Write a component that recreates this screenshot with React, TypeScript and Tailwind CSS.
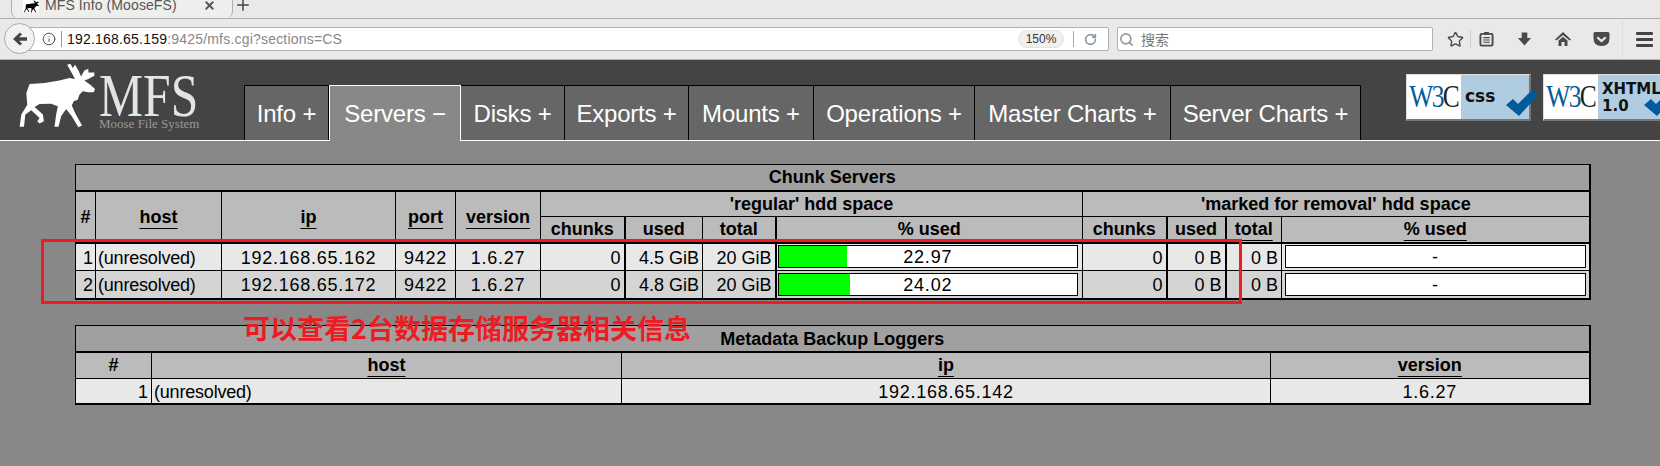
import React from 'react';
import { Info, RotateCw, Search, Star, Plus, X } from 'lucide-react';

const MOOSE =
  'M85 103 L130 100 L175 92 L205 85 L222 88 L212 70 L198 45 L208 42 L215 55 L222 45 L232 62 L240 80 L250 62 L262 57 L262 68 L280 68 L280 78 L262 88 L250 92 L268 105 L282 118 L278 128 L262 128 L245 125 L235 135 L230 150 L218 155 L212 168 L222 190 L243 228 L232 233 L212 200 L195 178 L180 200 L172 232 L160 232 L165 195 L170 170 L150 162 L115 163 L100 172 L125 195 L128 215 L115 222 L108 215 L115 205 L90 182 L72 195 L68 232 L55 232 L60 195 L78 165 L75 130 Z';

function Moose({ className }: { className: string }) {
  return (
    <svg viewBox="50 40 235 195" className={className} fill="currentColor">
      <path d={MOOSE} />
    </svg>
  );
}

const tabs = [
  { label: 'Info +', width: 'w-[85px]' },
  { label: 'Servers −', width: 'w-[132px]', active: true },
  { label: 'Disks +', width: 'w-[104px]' },
  { label: 'Exports +', width: 'w-[124px]' },
  { label: 'Mounts +', width: 'w-[125px]' },
  { label: 'Operations +', width: 'w-[161px]' },
  { label: 'Master Charts +', width: 'w-[196px]' },
  { label: 'Server Charts +', width: 'w-[190px]' },
];

function BrowserChrome() {
  return (
    <div className="h-[60px] bg-[#e9e9e7] border-b border-[#b4b4b2]">
      {/* tab strip */}
      <div className="h-[19px] border-b border-[#aeaeac] flex items-center relative overflow-hidden">
        <div className="ml-[11px] w-[222px] h-[19px] bg-[#eeeeec] border-r border-l border-[#aeaeac] rounded-b-[8px] flex items-center pl-[11px] text-[#444]">
          <div className="w-[16px] h-[14px] bg-white flex items-center justify-center -mt-[6px]">
            <Moose className="w-[15px] h-[13px] text-black" />
          </div>
          <span className="ml-[6px] w-[150px] text-[14px] leading-[15px] -mt-[8px] tracking-[0.1px] text-[#555]">MFS Info (MooseFS)</span>
          <X size={13} strokeWidth={3.5} className="-mt-[8px] ml-[8px] text-[#555]" />
        </div>
        <Plus size={18} strokeWidth={2} className="ml-[1px] -mt-[8px] text-[#444]" />
      </div>
      {/* address row */}
      <div className="h-[40px] flex items-center relative">
        <div className="ml-[18px] w-[1091px] h-[24px] bg-white border border-[#b0b0ae] rounded-[2px] flex items-center text-[14px] tracking-[0.2px]">
          <Info size={14} strokeWidth={1.6} className="ml-[23px] text-[#444]" />
          <div className="ml-[5px] w-px h-[16px] bg-[#999]" />
          <span className="ml-[5px] text-[#111]">192.168.65.159</span>
          <span className="text-[#888]">:9425/mfs.cgi?sections=CS</span>
          <div className="ml-auto w-[46px] h-[18px] bg-[#f0f0f0] border border-[#e4e4e4] rounded-full text-[12px] leading-[16px] text-center text-[#333] tracking-normal">150%</div>
          <div className="ml-[9px] w-px h-[16px] bg-[#aaa]" />
          <RotateCw size={13} strokeWidth={3} className="ml-[10px] mr-[11px] text-[#8a97a5]" />
        </div>
        {/* back button sits over the left of the url bar */}
        <div className="absolute left-[4px] top-[4px] w-[31px] h-[31px] rounded-full bg-[#f2f2f0] border border-[#aaa] flex items-center justify-center">
          <svg viewBox="0 0 16 16" className="w-[16px] h-[16px] text-[#444]" fill="currentColor">
            <path d="M8 1.5 L1 8 L8 14.5 L10 12.5 L7 9.8 H15 V6.2 H7 L10 3.5 Z" />
          </svg>
        </div>
        <div className="ml-[8px] w-[316px] h-[24px] bg-white border border-[#b0b0ae] rounded-[2px] flex items-center">
          <Search size={15} strokeWidth={2.6} className="ml-[1px] text-[#999]" />
          <span className="ml-[7px] text-[14px] text-[#777] font-['Noto_Sans_CJK_SC',sans-serif]">搜索</span>
        </div>
        <Star size={17} strokeWidth={2} className="ml-[14px] text-[#4a4a4a]" />
        <div className="ml-[6px] w-px h-[18px] bg-[#cfcfcd]" />
        <svg viewBox="0 0 16 16" className="ml-[8px] w-[15px] h-[16px] text-[#4a4a4a]">
          <rect x="1.5" y="2.5" width="13" height="12.5" rx="1.5" fill="none" stroke="currentColor" strokeWidth="2" />
          <rect x="5.5" y="0.5" width="5" height="3" fill="currentColor" />
          <path d="M4.5 6.5 H11.5 M4.5 9 H11.5 M4.5 11.5 H11.5" stroke="currentColor" strokeWidth="1.2" />
        </svg>
        <svg viewBox="0 0 16 16" className="ml-[23px] w-[15px] h-[16px] text-[#4a4a4a]" fill="currentColor">
          <path d="M5 1 H11 V7 H15 L8 15 L1 7 H5 Z" />
        </svg>
        <svg viewBox="0 0 16 16" className="ml-[23px] w-[16px] h-[16px] text-[#4a4a4a]" fill="currentColor">
          <path d="M8 1 L16 8.5 L14.5 9.5 L8 4 L1.5 9.5 L0 8.5 Z M3.5 9.5 L8 5.8 L12.5 9.5 V15 H9.5 V11 H6.5 V15 H3.5 Z" />
        </svg>
        <svg viewBox="0 0 16 16" className="ml-[22px] w-[17px] h-[16px] text-[#4a4a4a]" fill="currentColor">
          <path d="M1.5 1 H14.5 Q16 1 16 2.5 V7 Q16 15 8 15 Q0 15 0 7 V2.5 Q0 1 1.5 1 Z M4.5 5.5 L3 7 L8 11.5 L13 7 L11.5 5.5 L8 8.6 Z" fillRule="evenodd" />
        </svg>
        <div className="ml-[12px] w-px h-[36px] bg-[#dcdcda]" />
        <div className="ml-[13px] w-[17px] flex flex-col gap-[3px]">
          <div className="h-[3px] bg-[#444] rounded-[1px]" />
          <div className="h-[3px] bg-[#444] rounded-[1px]" />
          <div className="h-[3px] bg-[#444] rounded-[1px]" />
        </div>
      </div>
    </div>
  );
}

function Logo() {
  return (
    <div className="w-[244px] shrink-0 pl-[18px] pt-[3px] flex">
      <Moose className="w-[78px] h-[65px] text-white" />
      <div className="ml-[3px] font-['Liberation_Serif',serif]">
        <div className="mt-[11px] h-[42px] text-[62px] leading-[42px] scale-x-[0.8] origin-left text-[#e4e4e4]">MFS</div>
        <div className="text-[13px] leading-[14px] mt-[1px] whitespace-nowrap text-[#999]">Moose File System</div>
      </div>
    </div>
  );
}

function W3cBadge({ wide }: { wide?: boolean }) {
  return (
    <div className={(wide ? 'ml-[12px] w-[132px] ' : 'w-[125px] ') + 'h-[47px] flex shrink-0 relative border-l border-t border-[#ddd] border-r-2 border-b-2 border-r-[#777] border-b-[#777]'}>
      <div className="w-[54px] h-full bg-white flex items-center justify-center font-['Liberation_Serif',serif] text-[31px] tracking-[-2px] text-[#005a9c]">
        <span className="scale-x-[0.82]">
          W3<span className="text-[#222]">C</span>
        </span>
      </div>
      <div className="flex-1 bg-[#b0cce0] font-['DejaVu_Sans',sans-serif] font-bold text-[#111] pl-[4px]">
        {wide ? (
          <div className="text-[15px] leading-[17px] pt-[6px]">
            XHTML
            <br />
            1.0
          </div>
        ) : (
          <div className="text-[17px] leading-[17px] pt-[13px]">css</div>
        )}
      </div>
      <svg viewBox="0 0 32 26" className={wide ? 'absolute left-[100px] top-[15px] w-[32px] h-[26px] text-[#005a9c]' : 'absolute left-[99px] top-[15px] w-[32px] h-[26px] text-[#005a9c]'} fill="currentColor">
        <path d="M0 15 L7 9 L12 14 L26 0 L32 5 L13 26 Z" />
      </svg>
    </div>
  );
}

function Header() {
  return (
    <div className="h-[81px] bg-[#444] border-b border-white flex">
      <Logo />
      <div className="mt-[25px] h-[56px] flex shrink-0">
        {tabs.map((t) => (
          <div
            key={t.label}
            className={
              t.active
                ? t.width + ' h-[56px] bg-[#888] border border-b-0 border-white text-[24px] leading-[56px] text-center text-white tracking-[-0.2px] whitespace-nowrap'
                : t.width + ' h-[55px] bg-[#666] border-t border-r border-black first:border-l text-[24px] leading-[55px] text-center text-white tracking-[-0.2px] whitespace-nowrap'
            }
          >
            {t.label}
          </div>
        ))}
      </div>
      <div className="ml-[45px] mt-[14px] flex">
        <W3cBadge />
        <W3cBadge wide />
      </div>
    </div>
  );
}

const thBase = 'bg-[#bbb] font-bold text-[18px] leading-[20px] text-center text-black p-0 border border-black';
const tdBase = 'text-[18px] leading-[20px] text-black p-0 border border-black';
const tdText = tdBase + ' pt-[2px]';

function Th({ children, thick, className = '', colSpan, rowSpan }: { children: React.ReactNode; thick?: boolean; className?: string; colSpan?: number; rowSpan?: number }) {
  return (
    <th colSpan={colSpan} rowSpan={rowSpan} className={thBase + (thick ? ' border-r-[2px] ' : ' ') + className}>
      {children}
    </th>
  );
}

function Sort({ children }: { children: React.ReactNode }) {
  return <span className="underline underline-offset-[5px] decoration-1">{children}</span>;
}

function UsageBar({ value }: { value?: number }) {
  return (
    <div className={(value !== undefined ? 'ml-[1px] ' : 'mx-auto ') + 'w-[calc(100%-5px)] h-[23px] relative bg-white border border-black overflow-hidden'}>
      {value !== undefined && <div className="h-full bg-[#0f0]" style={{ width: `${value}%` }} />}
      <div className="absolute inset-0 text-center leading-[23px] tracking-[0.8px]">{value !== undefined ? value.toFixed(2) : '-'}</div>
    </div>
  );
}

const servers = [
  { id: 1, ip: '192.168.65.162', used: '4.5 GiB', pct: 22.97, bg: 'bg-[#e8e8e8]' },
  { id: 2, ip: '192.168.65.172', used: '4.8 GiB', pct: 24.02, bg: 'bg-[#d4d4d4]' },
];

function ChunkServers() {
  return (
    <table className="table-fixed border-collapse w-[1514px] border-r-2 border-b-2 border-black">
      <colgroup>
        <col className="w-[20px]" />
        <col className="w-[126px]" />
        <col className="w-[174px]" />
        <col className="w-[60px]" />
        <col className="w-[85px]" />
        <col className="w-[84px]" />
        <col className="w-[78px]" />
        <col className="w-[73px]" />
        <col className="w-[307px]" />
        <col className="w-[84px]" />
        <col className="w-[59px]" />
        <col className="w-[56px]" />
        <col className="w-[308px]" />
      </colgroup>
      <thead>
        <tr className="h-[26px]">
          <th colSpan={13} className="bg-[#a0a0a0] font-bold text-[18px] leading-[20px] text-center text-black p-0 border border-black border-b-2 border-r-2">
            Chunk Servers
          </th>
        </tr>
        <tr className="h-[26px]">
          <Th rowSpan={2}>#</Th>
          <Th rowSpan={2}><Sort>host</Sort></Th>
          <Th rowSpan={2}><Sort>ip</Sort></Th>
          <Th rowSpan={2}><Sort>port</Sort></Th>
          <Th rowSpan={2}><Sort>version</Sort></Th>
          <Th colSpan={4}>'regular' hdd space</Th>
          <Th colSpan={4}>'marked for removal' hdd space</Th>
        </tr>
        <tr className="h-[26px] border-b-2 border-black">
          <Th thick><Sort>chunks</Sort></Th>
          <Th><Sort>used</Sort></Th>
          <Th thick><Sort>total</Sort></Th>
          <Th><Sort>% used</Sort></Th>
          <Th thick><Sort>chunks</Sort></Th>
          <Th thick><Sort>used</Sort></Th>
          <Th><Sort>total</Sort></Th>
          <Th><Sort>% used</Sort></Th>
        </tr>
      </thead>
      <tbody>
        {servers.map((s) => (
          <tr key={s.id} className={s.bg + ' h-[28px]'}>
            <td className={tdText + ' text-right pr-[2px]'}>{s.id}</td>
            <td className={tdText + ' pl-[2px] tracking-[-0.2px]'}>(unresolved)</td>
            <td className={tdText + ' text-center tracking-[0.75px]'}>{s.ip}</td>
            <td className={tdText + ' text-center tracking-[0.75px]'}>9422</td>
            <td className={tdText + ' text-center tracking-[0.75px]'}>1.6.27</td>
            <td className={tdText + ' text-right pr-[3px] border-r-2'}>0</td>
            <td className={tdText + ' text-right pr-[3px]'}>{s.used}</td>
            <td className={tdText + ' text-right pr-[3px] border-r-2'}>20 GiB</td>
            <td className={tdBase}><UsageBar value={s.pct} /></td>
            <td className={tdText + ' text-right pr-[3px] border-r-2'}>0</td>
            <td className={tdText + ' text-right pr-[3px] border-r-2'}>0 B</td>
            <td className={tdText + ' text-right pr-[3px]'}>0 B</td>
            <td className={tdBase}><UsageBar /></td>
          </tr>
        ))}
      </tbody>
    </table>
  );
}

function BackupLoggers() {
  return (
    <table className="table-fixed border-collapse w-[1514px] mt-[25px] border-r-2 border-b-2 border-black">
      <colgroup>
        <col className="w-[76px]" />
        <col className="w-[470px]" />
        <col className="w-[649px]" />
        <col className="w-[319px]" />
      </colgroup>
      <thead>
        <tr className="h-[27px]">
          <th colSpan={4} className="bg-[#a0a0a0] font-bold text-[18px] leading-[20px] pt-[1px] text-center text-black p-0 border border-black border-b-2">
            Metadata Backup Loggers
          </th>
        </tr>
        <tr className="h-[26px]">
          <Th>#</Th>
          <Th><Sort>host</Sort></Th>
          <Th><Sort>ip</Sort></Th>
          <Th><Sort>version</Sort></Th>
        </tr>
      </thead>
      <tbody>
        <tr className="h-[26px] bg-[#e8e8e8]">
          <td className={tdText + ' text-right pr-[3px]'}>1</td>
          <td className={tdText + ' pl-[2px] tracking-[-0.2px]'}>(unresolved)</td>
          <td className={tdText + ' text-center tracking-[0.75px]'}>192.168.65.142</td>
          <td className={tdText + ' text-center tracking-[0.75px]'}>1.6.27</td>
        </tr>
      </tbody>
    </table>
  );
}

export default function App() {
  return (
    <div className="relative w-[1660px] h-[466px] overflow-hidden bg-[#888] font-['Liberation_Sans',sans-serif]">
      <BrowserChrome />
      <Header />
      <div className="pl-[75px] pt-[23px]">
        <ChunkServers />
        <BackupLoggers />
      </div>

      {/* red annotation drawn over the screenshot */}
      <div className="absolute left-[41px] top-[239px] w-[1201px] h-[65px] border-[3px] border-[#ed1c24]" />
      <div className="absolute left-[243px] top-[313px] text-[27px] leading-[30px] font-bold text-[#ed1c24] whitespace-nowrap font-['Noto_Sans_CJK_SC',sans-serif]">
        可以查看2台数据存储服务器相关信息
      </div>
    </div>
  );
}
